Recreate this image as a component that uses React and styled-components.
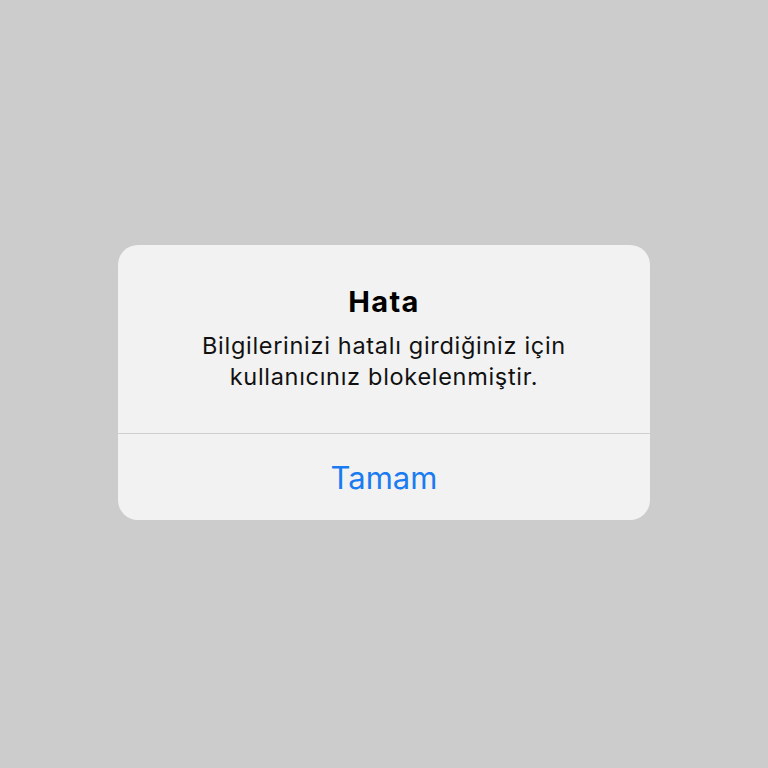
import React from 'react';
import styled, { createGlobalStyle } from 'styled-components';

const GlobalStyle = createGlobalStyle`
  html, body {
    margin: 0;
    padding: 0;
    background: #cccccc;
  }
  body {
    font-family: Inter, "Noto Sans", "Liberation Sans", sans-serif;
  }
`;

const Screen = styled.div`
  width: 768px;
  height: 768px;
  box-sizing: border-box;
  padding-top: 245px;
  display: flex;
  justify-content: center;
  align-items: flex-start;
`;

const Dialog = styled.div`
  width: 532px;
  height: 275px;
  background: #f2f2f2;
  border-radius: 20px;
  display: flex;
  flex-direction: column;
  overflow: hidden;
`;

const Content = styled.div`
  height: 188px;
  display: flex;
  flex-direction: column;
  align-items: center;
  padding-top: 40px;
  box-sizing: border-box;
  text-align: center;
`;

const Title = styled.div`
  font-size: 29px;
  font-weight: 650;
  letter-spacing: 1.4px;
  color: #000;
  line-height: 34px;
  margin-bottom: 11px;
`;

const Message = styled.div`
  font-size: 23.5px;
  letter-spacing: 0.7px;
  color: #111;
  line-height: 31px;
`;

const Divider = styled.div`
  height: 1px;
  background: #cfcfcf;
`;

const Action = styled.button`
  flex: 1;
  border: none;
  background: transparent;
  font-family: inherit;
  font-size: 31px;
  color: #1a7cf0;
  cursor: pointer;
  padding: 0;
`;

export default function App() {
  return (
    <>
      <GlobalStyle />
      <Screen>
        <Dialog>
          <Content>
            <Title>Hata</Title>
            <Message>
              Bilgilerinizi hatalı girdiğiniz için
              <br />
              kullanıcınız blokelenmiştir.
            </Message>
          </Content>
          <Divider />
          <Action>Tamam</Action>
        </Dialog>
      </Screen>
    </>
  );
}
